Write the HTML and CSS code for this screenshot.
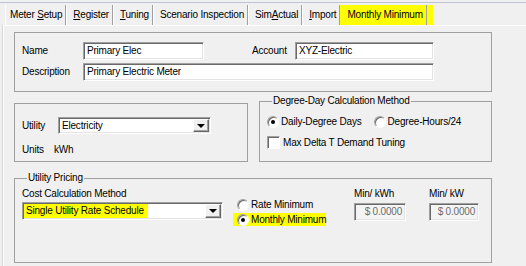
FILE: index.html
```html
<!DOCTYPE html>
<html lang="en">

<head>
  <meta charset="UTF-8" />
  <title>Meter Setup</title>
  <link rel="stylesheet" href="styles.css">
</head>

<body>
  <div class="window">
    <div class="tabs">
      <div class="tab active"><span>Meter <u>S</u>etup</span></div>
      <div class="tab"><span><u>R</u>egister</span></div>
      <div class="tab"><span><u>T</u>uning</span></div>
      <div class="tab"><span>Scenario Inspection</span></div>
      <div class="tab"><span>Sim<u>A</u>ctual</span></div>
      <div class="tab"><span><u>I</u>mport</span></div>
      <div class="tab marked"><span>Monthly Minimum</span></div>
    </div>

    <div class="panel">
      <div class="group ident">
        <div class="row">
          <span class="lbl">Name</span>
          <div class="edit name">Primary Elec</div>
          <span class="lbl acct">Account</span>
          <div class="edit account">XYZ-Electric</div>
        </div>
        <div class="row">
          <span class="lbl">Description</span>
          <div class="edit desc">Primary Electric Meter</div>
        </div>
      </div>

      <div class="pair">
        <div class="group utility">
          <div class="row">
            <span class="lbl short">Utility</span>
            <div class="combo util-combo">
              <div class="val">Electricity</div>
              <div class="drop"></div>
            </div>
          </div>
          <div class="row units">
            <span class="lbl unit-lbl">Units</span>
            <span>kWh</span>
          </div>
        </div>

        <div class="group degree">
          <div class="caption">Degree-Day Calculation Method</div>
          <div class="row opts">
            <span class="opt"><span class="radio on"></span>Daily-Degree Days</span>
            <span class="opt second"><span class="radio"></span>Degree-Hours/24</span>
          </div>
          <div class="row opts">
            <span class="opt"><span class="check"></span>Max Delta T Demand Tuning</span>
          </div>
        </div>
      </div>

      <div class="group pricing">
        <div class="caption">Utility Pricing</div>
        <div class="cols">
          <div class="col method">
            <span>Cost Calculation Method</span>
            <div class="combo rate-combo">
              <div class="val marked"><span class="hl">Single Utility Rate Schedule</span></div>
              <div class="drop"></div>
            </div>
          </div>
          <div class="col choice">
            <span class="opt"><span class="radio"></span>Rate Minimum</span>
            <span class="opt marked"><span class="radio on"></span>Monthly Minimum</span>
          </div>
          <div class="col amount">
            <span>Min/ kWh</span>
            <div class="edit off">$ 0.0000</div>
          </div>
          <div class="col amount kw">
            <span>Min/ kW</span>
            <div class="edit off">$ 0.0000</div>
          </div>
        </div>
      </div>
    </div>
  </div>
</body>

</html>
```

FILE: styles.css
```css
* {
  box-sizing: border-box;
}

body {
  margin: 0;
  background-color: #f0f0f0;
  font-family: "Liberation Sans", Arial, sans-serif;
  font-size: 10px;
  letter-spacing: -0.2px;
  line-height: 12px;
  color: #000;
}

.window {
  margin-top: 2px;
  border-top: 1px solid #bcc5d1;
  height: 264px;
  display: flex;
  flex-direction: column;
}

/* tab strip */
.tabs {
  display: flex;
  height: 22px;
  padding: 2px 0 0 5px;
}

.tab {
  display: flex;
  align-items: center;
  padding: 0 3px 0 7px;
  border-right: 1px solid #a0a0a0;
  box-shadow: 1px 0 #fff;
  white-space: nowrap;
}

.tab.active {
  border-left: 1px solid #fff;
  padding-left: 4px;
}

.tab.marked {
  background: #ffff00;
  box-shadow: 6px 0 #ffff00;
}

.panel {
  flex: 1;
  margin-left: 3px;
  border-left: 1px solid #fff;
  border-top: 1px solid #fff;
  box-shadow: -1px 0 #d8d8d8;
  padding: 6px 0 0 10px;
}

/* group boxes */
.group {
  width: 478px;
  border: 1px solid #a0a0a0;
}

.caption {
  display: table;
  margin: -7px 0 0 5px;
  padding: 0 1px;
  background: #f0f0f0;
}

.row {
  display: flex;
  align-items: center;
}

.row + .row {
  margin-top: 3px;
}

.lbl {
  width: 61px;
}

.ident {
  padding: 9px 7px 10px;
}

.name {
  width: 121px;
}

.acct {
  width: 43px;
  margin-left: 48px;
}

.account {
  width: 139px;
}

.desc {
  width: 351px;
}

/* edit boxes + combos */
.edit,
.combo {
  height: 18px;
  background: #fff;
  border: 1px solid;
  border-color: #a0a0a0 #fff #fff #a0a0a0;
  box-shadow: inset 1px 1px #696969, inset -1px -1px #e3e3e3;
  display: flex;
  align-items: center;
}

.edit {
  padding: 0 3px;
}

.edit.off {
  background: #f4f4f4;
  color: #6d6d6d;
  justify-content: flex-end;
}

.combo {
  padding: 1px;
  align-items: stretch;
}

.combo .val {
  flex: 1;
  display: flex;
  align-items: center;
  padding-left: 2px;
}

.combo .val.marked {
  padding-left: 0;
}

.hl {
  height: 100%;
  display: flex;
  align-items: center;
  background: #ffff00;
  padding: 0 4px 0 2px;
}

.drop {
  width: 16px;
  background: #f0f0f0;
  border: 1px solid;
  border-color: #fff #696969 #696969 #fff;
  box-shadow: inset -1px -1px #a0a0a0;
  display: flex;
  align-items: center;
  justify-content: center;
}

.drop::after {
  content: "";
  border-top: 4px solid #000;
  border-left: 4px solid transparent;
  border-right: 4px solid transparent;
}

/* utility + degree day */
.pair {
  display: flex;
  align-items: flex-start;
  margin-top: 9px;
}

.utility {
  width: 234px;
  margin-top: 2px;
  padding: 13px 0 5px 7px;
}

.short {
  width: 36px;
}

.util-combo {
  width: 153px;
  height: 17px;
}

.row.units {
  margin-top: 10px;
}

.unit-lbl {
  width: 32px;
}

.degree {
  width: 233px;
  margin-left: 11px;
  padding: 0 0 12px 7px;
}

.row.opts {
  margin-top: 8px;
}

.opt {
  display: flex;
  align-items: center;
  height: 13px;
  white-space: nowrap;
}

.opt.second {
  margin-left: 12px;
}

.radio,
.check {
  flex: none;
  width: 12px;
  height: 12px;
  margin-right: 2px;
  background: #fff;
  border: 1px solid;
  border-color: #a0a0a0 #fff #fff #a0a0a0;
  box-shadow: inset 1px 1px #696969;
  display: flex;
  align-items: center;
  justify-content: center;
}

.radio {
  border-radius: 50%;
}

.radio.on::after {
  content: "";
  width: 4px;
  height: 4px;
  border-radius: 50%;
  background: #000;
}

.check {
  width: 13px;
  height: 13px;
  margin-right: 3px;
}

/* pricing */
.pricing {
  margin-top: 16px;
  padding: 0 0 36px 7px;
}

.cols {
  display: flex;
  align-items: flex-start;
  margin-top: 4px;
}

.col {
  display: flex;
  flex-direction: column;
  align-items: flex-start;
}

.method {
  width: 201px;
}

.rate-combo {
  width: 201px;
  margin-top: 2px;
}

.choice {
  width: 121px;
  margin-left: 10px;
  margin-top: 10px;
  gap: 2px;
}

.choice .opt {
  padding-left: 4px;
}

.choice .opt.marked {
  background: #ffff00;
  width: 93px;
}

.amount {
  width: 52px;
}

.amount .edit {
  width: 100%;
  margin-top: 3px;
}

.amount.kw {
  width: 50px;
  margin-left: 23px;
}
```
